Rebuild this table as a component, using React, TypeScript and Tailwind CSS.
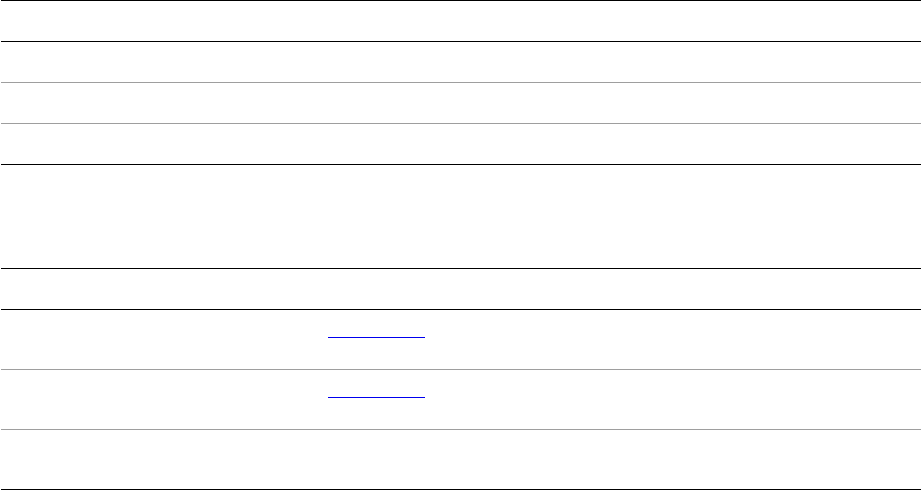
export default function App() {
  const topRows = [0, 1, 2];
  const bottomRows = [true, true, false];

  return (
    <div className="w-[922px] h-[490px] bg-white px-px overflow-hidden font-['Liberation_Sans',sans-serif]">
      {/* First table */}
      <div className="border-t border-black">
        <div className="h-[41px] border-b border-black" />
        {topRows.map((i) => (
          <div
            key={i}
            className={
              i === topRows.length - 1
                ? 'h-[41px] border-b border-black'
                : 'h-[41px] border-b border-[#9e9e9e]'
            }
          />
        ))}
      </div>

      {/* Second table */}
      <div className="mt-[103px] border-t border-black">
        <div className="h-[41px] border-b border-black" />
        {bottomRows.map((hasLink, i) => (
          <div
            key={i}
            className={
              i === bottomRows.length - 1
                ? 'h-[60px] border-b border-black grid grid-cols-[327px_1fr]'
                : 'h-[60px] border-b border-[#9e9e9e] grid grid-cols-[327px_1fr]'
            }
          >
            <div />
            <div>
              {hasLink && <div className="mt-[27px] w-[97px] h-px bg-[#0000ee]" />}
            </div>
          </div>
        ))}
      </div>
    </div>
  );
}
